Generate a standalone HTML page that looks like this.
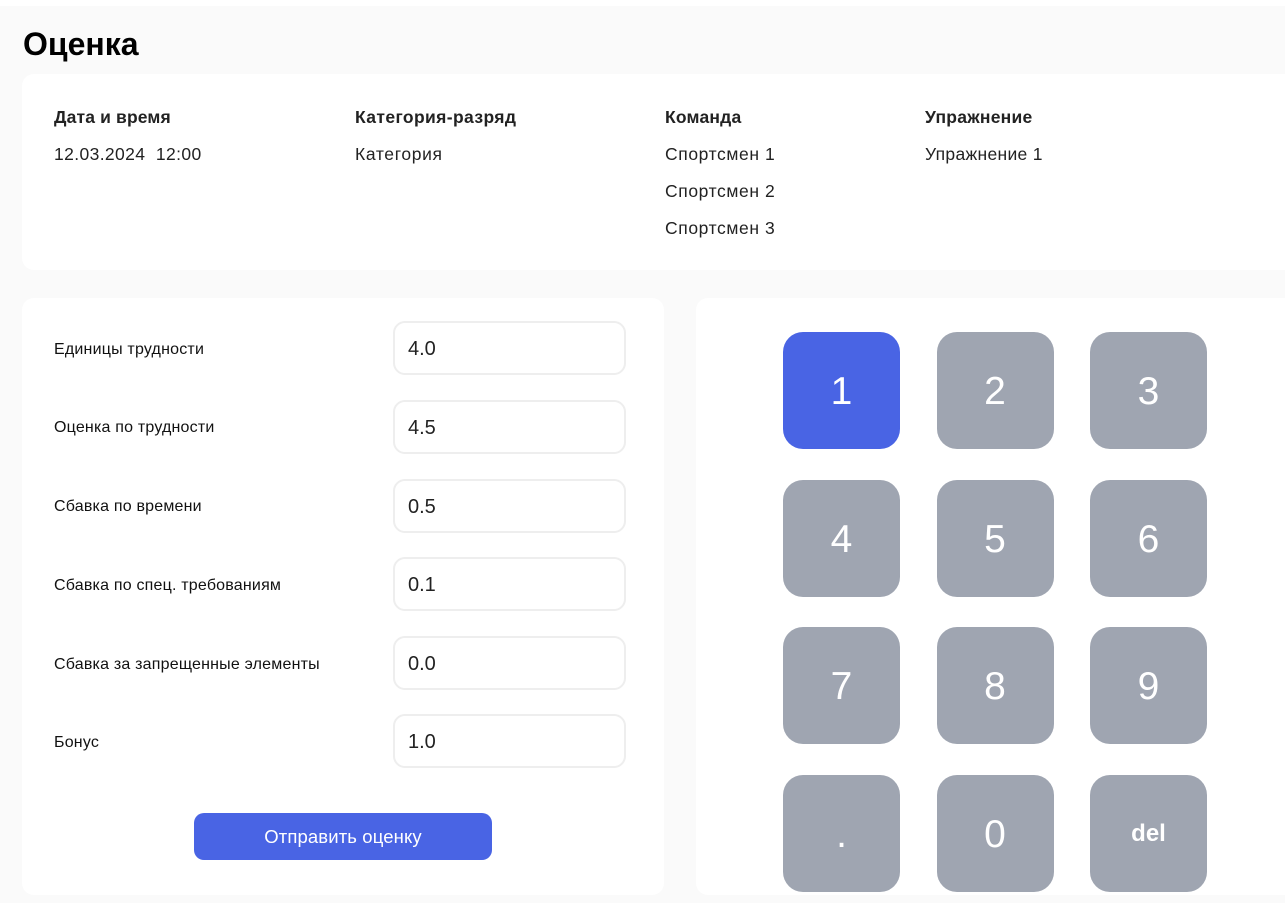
<!DOCTYPE html>
<html lang="ru"><head><meta charset="utf-8"><title>Оценка</title>
<style>
html,body{margin:0;padding:0;background:#fff}
body{width:1285px;height:903px;position:relative;overflow:hidden;font-family:"Liberation Sans",sans-serif;color:#222}
.a{position:absolute;white-space:nowrap}
.bg{left:0;top:6px;width:1285px;height:897px;background:#fafafa}
.card{background:#fff;border-radius:12px}
.h{font-weight:700;font-size:17.5px;line-height:20px;letter-spacing:.15px}
.t{font-size:17.5px;line-height:20px;letter-spacing:.6px}
.l{font-size:16px;line-height:20px;left:54px;color:#111;letter-spacing:.2px}
.i{left:393px;width:229px;height:50px;border:2px solid #eeeeee;border-radius:12px;background:#fff;font-size:20px;line-height:53px;text-indent:13px;color:#222}
.k{width:117px;height:117px;border-radius:20px;background:#9fa5b1;color:#fff;text-align:center;font-size:39px;line-height:119px}
</style></head><body>
<div class="a bg"></div>
<div class="a" style="left:23px;top:24px;font-size:32px;line-height:40px;font-weight:700;color:#000">Оценка</div>
<div class="a card" style="left:22px;top:74px;width:1275px;height:196px"></div>
<div class="a h" style="left:54px;top:107px">Дата и время</div>
<div class="a t" style="left:54px;top:144px;letter-spacing:.38px">12.03.2024&nbsp; 12:00</div>
<div class="a h" style="left:355px;top:107px;letter-spacing:.38px">Категория-разряд</div>
<div class="a t" style="left:355px;top:144px;letter-spacing:.65px">Категория</div>
<div class="a h" style="left:665px;top:107px;letter-spacing:.2px">Команда</div>
<div class="a t" style="left:665px;top:144px">Спортсмен 1</div>
<div class="a t" style="left:665px;top:181px">Спортсмен 2</div>
<div class="a t" style="left:665px;top:218px">Спортсмен 3</div>
<div class="a h" style="left:925px;top:107px;letter-spacing:.25px">Упражнение</div>
<div class="a t" style="left:925px;top:144px;letter-spacing:.3px">Упражнение 1</div>

<div class="a card" style="left:22px;top:298px;width:642px;height:597px"></div>
<div class="a l" style="top:340px">Единицы трудности</div>
<div class="a i" style="top:321px">4.0</div>
<div class="a l" style="top:418px">Оценка по трудности</div>
<div class="a i" style="top:400px">4.5</div>
<div class="a l" style="top:497px">Сбавка по времени</div>
<div class="a i" style="top:479px">0.5</div>
<div class="a l" style="top:576px">Сбавка по спец. требованиям</div>
<div class="a i" style="top:557px">0.1</div>
<div class="a l" style="top:655px">Сбавка за запрещенные элементы</div>
<div class="a i" style="top:636px">0.0</div>
<div class="a l" style="top:733px">Бонус</div>
<div class="a i" style="top:714px">1.0</div>
<div class="a" style="left:194px;top:813px;width:298px;height:47px;border-radius:10px;background:#4964e4;color:#fff;text-align:center;font-size:18.5px;line-height:47px;letter-spacing:.12px">Отправить оценку</div>

<div class="a card" style="left:696px;top:298px;width:601px;height:597px"></div>
<div class="a k" style="left:783px;top:332px;background:#4964e4">1</div>
<div class="a k" style="left:936.5px;top:332px">2</div>
<div class="a k" style="left:1090px;top:332px">3</div>
<div class="a k" style="left:783px;top:480px">4</div>
<div class="a k" style="left:936.5px;top:480px">5</div>
<div class="a k" style="left:1090px;top:480px">6</div>
<div class="a k" style="left:783px;top:627px">7</div>
<div class="a k" style="left:936.5px;top:627px">8</div>
<div class="a k" style="left:1090px;top:627px">9</div>
<div class="a k" style="left:783px;top:775px">.</div>
<div class="a k" style="left:936.5px;top:775px">0</div>
<div class="a k" style="left:1090px;top:775px;font-size:24px;font-weight:700;line-height:117px">del</div>
</body></html>
